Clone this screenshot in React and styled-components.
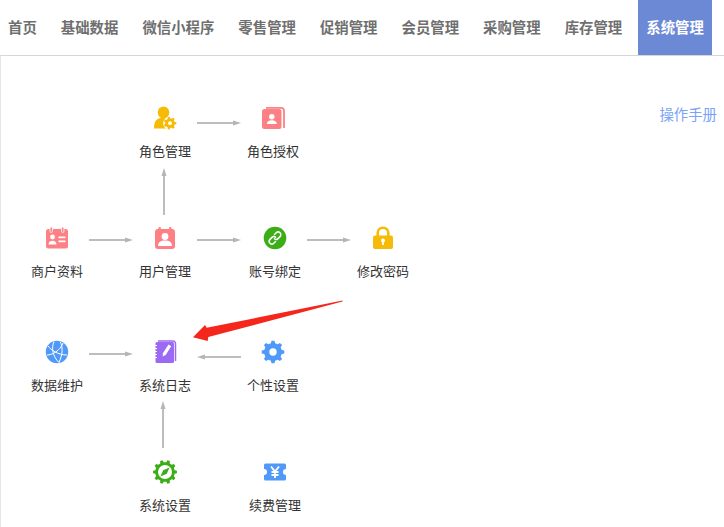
import React from 'react'
import styled, {createGlobalStyle} from 'styled-components'

const GlobalStyle = createGlobalStyle`
  html, body {
    margin: 0;
    padding: 0;
    background: #fff;
    font-family: "Noto Sans CJK SC", "Liberation Sans", sans-serif;
  }
`

const Page = styled.div`
  width: 724px;
  height: 527px;
  overflow: hidden;
`

const Nav = styled.nav`
  display: flex;
  gap: 8px;
  height: 55px;
`

const NavItem = styled.a`
  display: flex;
  align-items: center;
  padding: 0 8px 2px;
  font-size: 14.4px;
  font-weight: 700;
  color: ${p => (p.$active ? '#fff' : '#6f6f6f')};
  background: ${p => (p.$active ? '#6c89d6' : 'transparent')};
`

const Main = styled.main`
  display: flex;
  justify-content: space-between;
  height: 471px;
  border-top: 1px solid #d6d6d6;
  border-left: 1px solid #e6e6e6;
  padding-right: 7px;
`

const Canvas = styled.div`
  position: relative;
  flex: 1;
`

const Manual = styled.a`
  margin-top: 48px;
  height: 20px;
  line-height: 20px;
  font-size: 14.4px;
  color: #7ba3f5;
`

// node centres are given in page coordinates, canvas starts at (1, 56)
const Node = styled.div`
  position: absolute;
  left: ${p => p.$x - 41}px;
  top: ${p => p.$y - 68}px;
  width: 80px;
  display: flex;
  flex-direction: column;
  align-items: center;
`

const IconBox = styled.div`
  width: 24px;
  height: 24px;
  margin-bottom: 11px;
`

const Label = styled.span`
  height: 20px;
  line-height: 20px;
  font-size: 13px;
  color: #333;
  white-space: nowrap;
`

const Line = styled.svg`
  position: absolute;
  left: ${p => p.$x - 1}px;
  top: ${p => p.$y - 56}px;
  overflow: visible;
`

const gearPath = (cx, cy, rOut, rIn, teeth) => {
  const pts = []
  const step = (Math.PI * 2) / teeth
  for (let i = 0; i < teeth; i++) {
    const a = i * step
    const offs = [
      [-0.3, rIn],
      [-0.17, rOut],
      [0.17, rOut],
      [0.3, rIn],
    ]
    offs.forEach(([o, r]) => {
      const t = a + o * step
      pts.push(`${(cx + r * Math.cos(t)).toFixed(2)} ${(cy + r * Math.sin(t)).toFixed(2)}`)
    })
  }
  return `M${pts.join('L')}Z`
}

const YELLOW = '#f6bb06'
const PINK = '#fd8084'
const GREEN = '#3bad16'
const BLUE = '#5199f9'
const PURPLE = '#9b69f2'

const Svg = ({children}) => (
  <svg width="24" height="24" viewBox="0 0 24 24">
    {children}
  </svg>
)

const RoleIcon = () => (
  <Svg>
    <ellipse cx="10.500" cy="6.500" rx="5.800" ry="6" fill={YELLOW} />
    <path d="M1 22.500c0-6 1.500-11 9.500-11 4 0 6.500 1 8 3L13 22.500z" fill={YELLOW} />
    <circle cx="17" cy="17.200" r="6.800" fill="#fff" />
    <path d={gearPath(17, 17.200, 6.400, 4.900, 7)} fill={YELLOW} />
    <circle cx="17" cy="17.200" r="1.900" fill="#fff" />
  </Svg>
)

const AuthIcon = () => (
  <Svg>
    <path d="M5 1.800h15a3 3 0 0 1 3 3V22" fill="none" stroke={PINK} strokeWidth="1.800" />
    <rect x="1" y="3" width="19.500" height="20" rx="2.500" fill={PINK} />
    <circle cx="10.800" cy="10.800" r="2.700" fill="#fff" />
    <path d="M5.800 18c0-2.500 2-3.800 5-3.800s5 1.300 5 3.800z" fill="#fff" />
  </Svg>
)

const MerchantIcon = () => (
  <Svg>
    <rect x="1" y="3" width="22" height="19.500" rx="2.500" fill={PINK} />
    <rect x="5" y="1" width="2.400" height="5.500" rx="1.200" fill={PINK} stroke="#fff" strokeWidth=".8" />
    <rect x="16.500" y="1" width="2.400" height="5.500" rx="1.200" fill={PINK} stroke="#fff" strokeWidth=".8" />
    <circle cx="7.500" cy="11" r="2.400" fill="#fff" />
    <path d="M3.500 18.500c0-2.500 1.700-3.800 4-3.800s4 1.300 4 3.800z" fill="#fff" />
    <rect x="13.500" y="10.500" width="7" height="1.700" fill="#fff" />
    <rect x="13.500" y="14.500" width="7" height="1.700" fill="#fff" />
  </Svg>
)

const UserIcon = () => (
  <Svg>
    <rect x="2" y="3" width="20" height="20" rx="3" fill={PINK} />
    <rect x="5.500" y="1" width="2.400" height="5" rx="1.200" fill={PINK} />
    <rect x="16" y="1" width="2.400" height="5" rx="1.200" fill={PINK} />
    <circle cx="12" cy="10.500" r="3.400" fill="#fff" />
    <path d="M5 20c0-3.800 3-5.500 7-5.500s7 1.700 7 5.500z" fill="#fff" />
  </Svg>
)

const LinkIcon = () => (
  <Svg>
    <circle cx="12" cy="12" r="11.300" fill={GREEN} />
    <g fill="none" stroke="#fff" strokeWidth="1.500" strokeLinecap="round">
      <path d="M11.500 8.500l1.700-1.700a2.600 2.600 0 0 1 3.800 3.800l-2 2a2.600 2.600 0 0 1-3.600.1" />
      <path d="M12.500 15.500l-1.700 1.700a2.600 2.600 0 0 1-3.800-3.800l2-2a2.600 2.600 0 0 1 3.600-.1" />
    </g>
  </Svg>
)

const LockIcon = () => (
  <Svg>
    <path d="M6.700 11V7a5.300 5.300 0 0 1 10.600 0V11" fill="none" stroke={YELLOW} strokeWidth="2.600" />
    <rect x="2" y="9.500" width="20" height="13.500" rx="2" fill={YELLOW} />
    <circle cx="12" cy="14.500" r="2" fill="#fff" />
    <rect x="11.100" y="15" width="1.800" height="4" fill="#fff" />
  </Svg>
)

const GlobeIcon = () => (
  <Svg>
    <circle cx="12" cy="12" r="11.200" fill={BLUE} />
    <g fill="none" stroke="#fff" strokeWidth="1">
      <path d="M3 6c3 4 10 9 19 9" />
      <path d="M2 15c5 0 13-4 16-12" />
      <path d="M9 1.500C6 8 8 17 14 22.500" />
      <path d="M15 1.500c3 5 3 12-1 21" />
    </g>
  </Svg>
)

const NotebookIcon = () => (
  <Svg>
    <path d="M5 1h15a2.500 2.500 0 0 1 2.500 2.500V21" fill="none" stroke={PURPLE} strokeWidth="1.500" />
    <rect x="2.500" y="2" width="18.500" height="21" rx="1.500" fill={PURPLE} />
    <g stroke="#fff" strokeWidth="1">
      <path d="M1 5.500h3M1 8.500h3M1 11.500h3M1 14.500h3M1 17.500h3" />
    </g>
    <path d="M15.500 4.500l2.700 1.800-5.500 8.700-3 1.500.2-3.300z" fill="#fff" />
  </Svg>
)

const GearIcon = () => (
  <Svg>
    <path d={gearPath(12, 12, 11.400, 9, 8)} fill={BLUE} />
    <circle cx="12" cy="12" r="3.700" fill="#fff" />
  </Svg>
)

const SettingsIcon = () => (
  <Svg>
    <path d={gearPath(12, 12, 12, 9.800, 10)} fill={GREEN} />
    <circle cx="12" cy="12" r="7" fill="#fff" />
    <path d="M16.500 7.500L13.800 13.800 7.500 16.500 10.200 10.200z" fill={GREEN} />
  </Svg>
)

const TicketIcon = () => (
  <Svg>
    <path
      d="M2.500 3.500h19A1.500 1.500 0 0 1 23 5V9a3 3 0 0 0 0 6v4a1.500 1.500 0 0 1-1.500 1.500h-19A1.500 1.500 0 0 1 1 19V15a3 3 0 0 0 0-6V5A1.500 1.500 0 0 1 2.500 3.500z"
      fill={BLUE}
    />
    <g stroke="#fff" strokeWidth="1.800" fill="none">
      <path d="M8 6.500l4 5 4-5M12 11.500v6.500M8.500 12h7M8.500 15h7" />
    </g>
  </Svg>
)

const menu = ['首页', '基础数据', '微信小程序', '零售管理', '促销管理', '会员管理', '采购管理', '库存管理', '系统管理']

const nodes = [
  {x: 165, y: 118, label: '角色管理', Icon: RoleIcon},
  {x: 273, y: 118, label: '角色授权', Icon: AuthIcon},
  {x: 57, y: 238, label: '商户资料', Icon: MerchantIcon},
  {x: 165, y: 238, label: '用户管理', Icon: UserIcon},
  {x: 275, y: 238, label: '账号绑定', Icon: LinkIcon},
  {x: 383, y: 238, label: '修改密码', Icon: LockIcon},
  {x: 57, y: 352, label: '数据维护', Icon: GlobeIcon},
  {x: 165, y: 352, label: '系统日志', Icon: NotebookIcon},
  {x: 273, y: 352, label: '个性设置', Icon: GearIcon},
  {x: 165, y: 472, label: '系统设置', Icon: SettingsIcon},
  {x: 275, y: 472, label: '续费管理', Icon: TicketIcon},
]

const rightArrows = [
  [197, 123],
  [89, 240],
  [197, 240],
  [307, 240],
  [89, 354],
]

const Arrow = ({x, y, dir}) => {
  const horizontal = dir === 'right' || dir === 'left'
  const d = {
    right: 'M0 3h38',
    left: 'M6 3h38',
    up: 'M3 6v41',
  }[dir]
  const head = {
    right: 'M36 0.500l8 2.500-8 2.500z',
    left: 'M8 0.500l-8 2.500 8 2.500z',
    up: 'M0.500 8l2.500-8 2.500 8z',
  }[dir]
  return (
    <Line $x={x} $y={y} width={horizontal ? 44 : 6} height={horizontal ? 6 : 47}>
      <path d={d} stroke="#bdbdbd" strokeWidth="2" fill="none" />
      <path d={head} fill="#b5b5b5" />
    </Line>
  )
}

export default function App() {
  return (
    <Page>
      <GlobalStyle />
      <Nav>
        {menu.map(name => (
          <NavItem key={name} $active={name === '系统管理'}>
            {name}
          </NavItem>
        ))}
      </Nav>
      <Main>
        <Canvas>
          {rightArrows.map(([x, y]) => (
            <Arrow key={`${x}-${y}`} x={x} y={y - 3} dir="right" />
          ))}
          <Arrow x={197} y={354} dir="left" />
          <Arrow x={161} y={168} dir="up" />
          <Arrow x={160} y={401} dir="up" />
          {nodes.map(({x, y, label, Icon}) => (
            <Node key={label} $x={x} $y={y}>
              <IconBox>
                <Icon />
              </IconBox>
              <Label>{label}</Label>
            </Node>
          ))}
          <Line $x={190} $y={298} width={155} height={46}>
            <polygon points="152.500,2.500 16.700,29.800 15,27 3,39.300 17.700,43 18.300,39 152.500,3.500" fill="#f5261b" />
          </Line>
        </Canvas>
        <Manual>操作手册</Manual>
      </Main>
    </Page>
  )
}
